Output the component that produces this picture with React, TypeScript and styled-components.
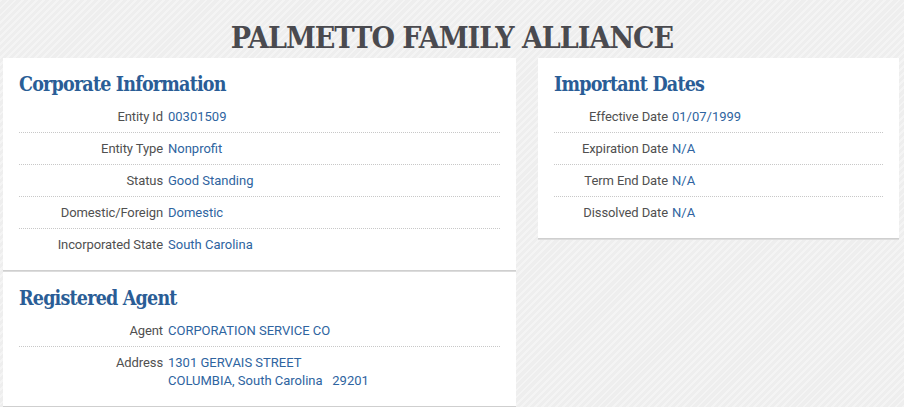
import React from "react";
import styled, { createGlobalStyle } from "styled-components";

const GlobalStyle = createGlobalStyle`
  html, body {
    margin: 0;
    padding: 0;
  }
  body {
    font-family: Roboto, "Liberation Sans", Arial, sans-serif;
    background-color: #f1f1f1;
    background-image: repeating-linear-gradient(
      135deg,
      #f4f4f4 0px,
      #f4f4f4 2px,
      #eeeeee 2px,
      #eeeeee 5px
    );
    min-height: 407px;
  }
`;

const Page = styled.div`
  padding: 0 5px 0 3px;
`;

const Title = styled.h1`
  margin: 0;
  height: 58px;
  display: flex;
  align-items: center;
  justify-content: center;
  padding-left: 2px;
  font-family: "DejaVu Serif Condensed", "DejaVu Serif", "Liberation Serif", serif;
  font-stretch: condensed;
  font-weight: bold;
  font-size: 30px;
  letter-spacing: -1px;
  color: #4a4a4f;
  box-sizing: border-box;
  padding-top: 16px;
`;

const Columns = styled.div`
  display: grid;
  grid-template-columns: 513px 361px;
  column-gap: 22px;
  align-items: start;
`;

const Stack = styled.div`
  display: flex;
  flex-direction: column;
  gap: 1px;
`;

const Card = styled.section`
  background: #ffffff;
  padding: 16px 16px 10px;
  border-bottom: 1px solid #cfcfcf;
  box-shadow: 0 1px 0 #dcdcdc;
`;

const Heading = styled.h2`
  margin: 0 0 5px;
  font-family: "DejaVu Serif Condensed", "DejaVu Serif", "Liberation Serif", serif;
  font-stretch: condensed;
  font-weight: bold;
  font-size: 19.5px;
  letter-spacing: -0.8px;
  line-height: 22px;
  color: #2a5d96;
`;

const Row = styled.div<{ $labelWidth: number; $gap: number }>`
  display: grid;
  grid-template-columns: ${(p) => p.$labelWidth}px 1fr;
  column-gap: ${(p) => p.$gap}px;
  padding: 6.5px 0;
  font-size: 13px;
  line-height: 18px;
  border-bottom: 1px dotted #c8c8c8;
  &:last-child {
    border-bottom: none;
  }
`;

const Label = styled.div`
  text-align: right;
  color: #505050;
  letter-spacing: -0.1px;
`;

const Value = styled.div`
  color: #2e64a0;
  white-space: pre;
`;

type Item = [string, string];

const InfoCard: React.FC<{
  title: string;
  items: Item[];
  labelWidth: number;
  gap: number;
}> = ({ title, items, labelWidth, gap }) => (
  <Card>
    <Heading>{title}</Heading>
    {items.map(([l, v]) => (
      <Row key={l} $labelWidth={labelWidth} $gap={gap}>
        <Label>{l}</Label>
        <Value>{v}</Value>
      </Row>
    ))}
  </Card>
);

export default function App() {
  return (
    <>
      <GlobalStyle />
      <Page>
        <Title>PALMETTO FAMILY ALLIANCE</Title>
        <Columns>
          <Stack>
            <InfoCard
              title="Corporate Information"
              labelWidth={144}
              gap={5}
              items={[
                ["Entity Id", "00301509"],
                ["Entity Type", "Nonprofit"],
                ["Status", "Good Standing"],
                ["Domestic/Foreign", "Domestic"],
                ["Incorporated State", "South Carolina"],
              ]}
            />
            <InfoCard
              title="Registered Agent"
              labelWidth={144}
              gap={5}
              items={[
                ["Agent", "CORPORATION SERVICE CO"],
                [
                  "Address",
                  "1301 GERVAIS STREET\nCOLUMBIA, South Carolina   29201",
                ],
              ]}
            />
          </Stack>
          <InfoCard
            title="Important Dates"
            labelWidth={114}
            gap={4}
            items={[
              ["Effective Date", "01/07/1999"],
              ["Expiration Date", "N/A"],
              ["Term End Date", "N/A"],
              ["Dissolved Date", "N/A"],
            ]}
          />
        </Columns>
      </Page>
    </>
  );
}
